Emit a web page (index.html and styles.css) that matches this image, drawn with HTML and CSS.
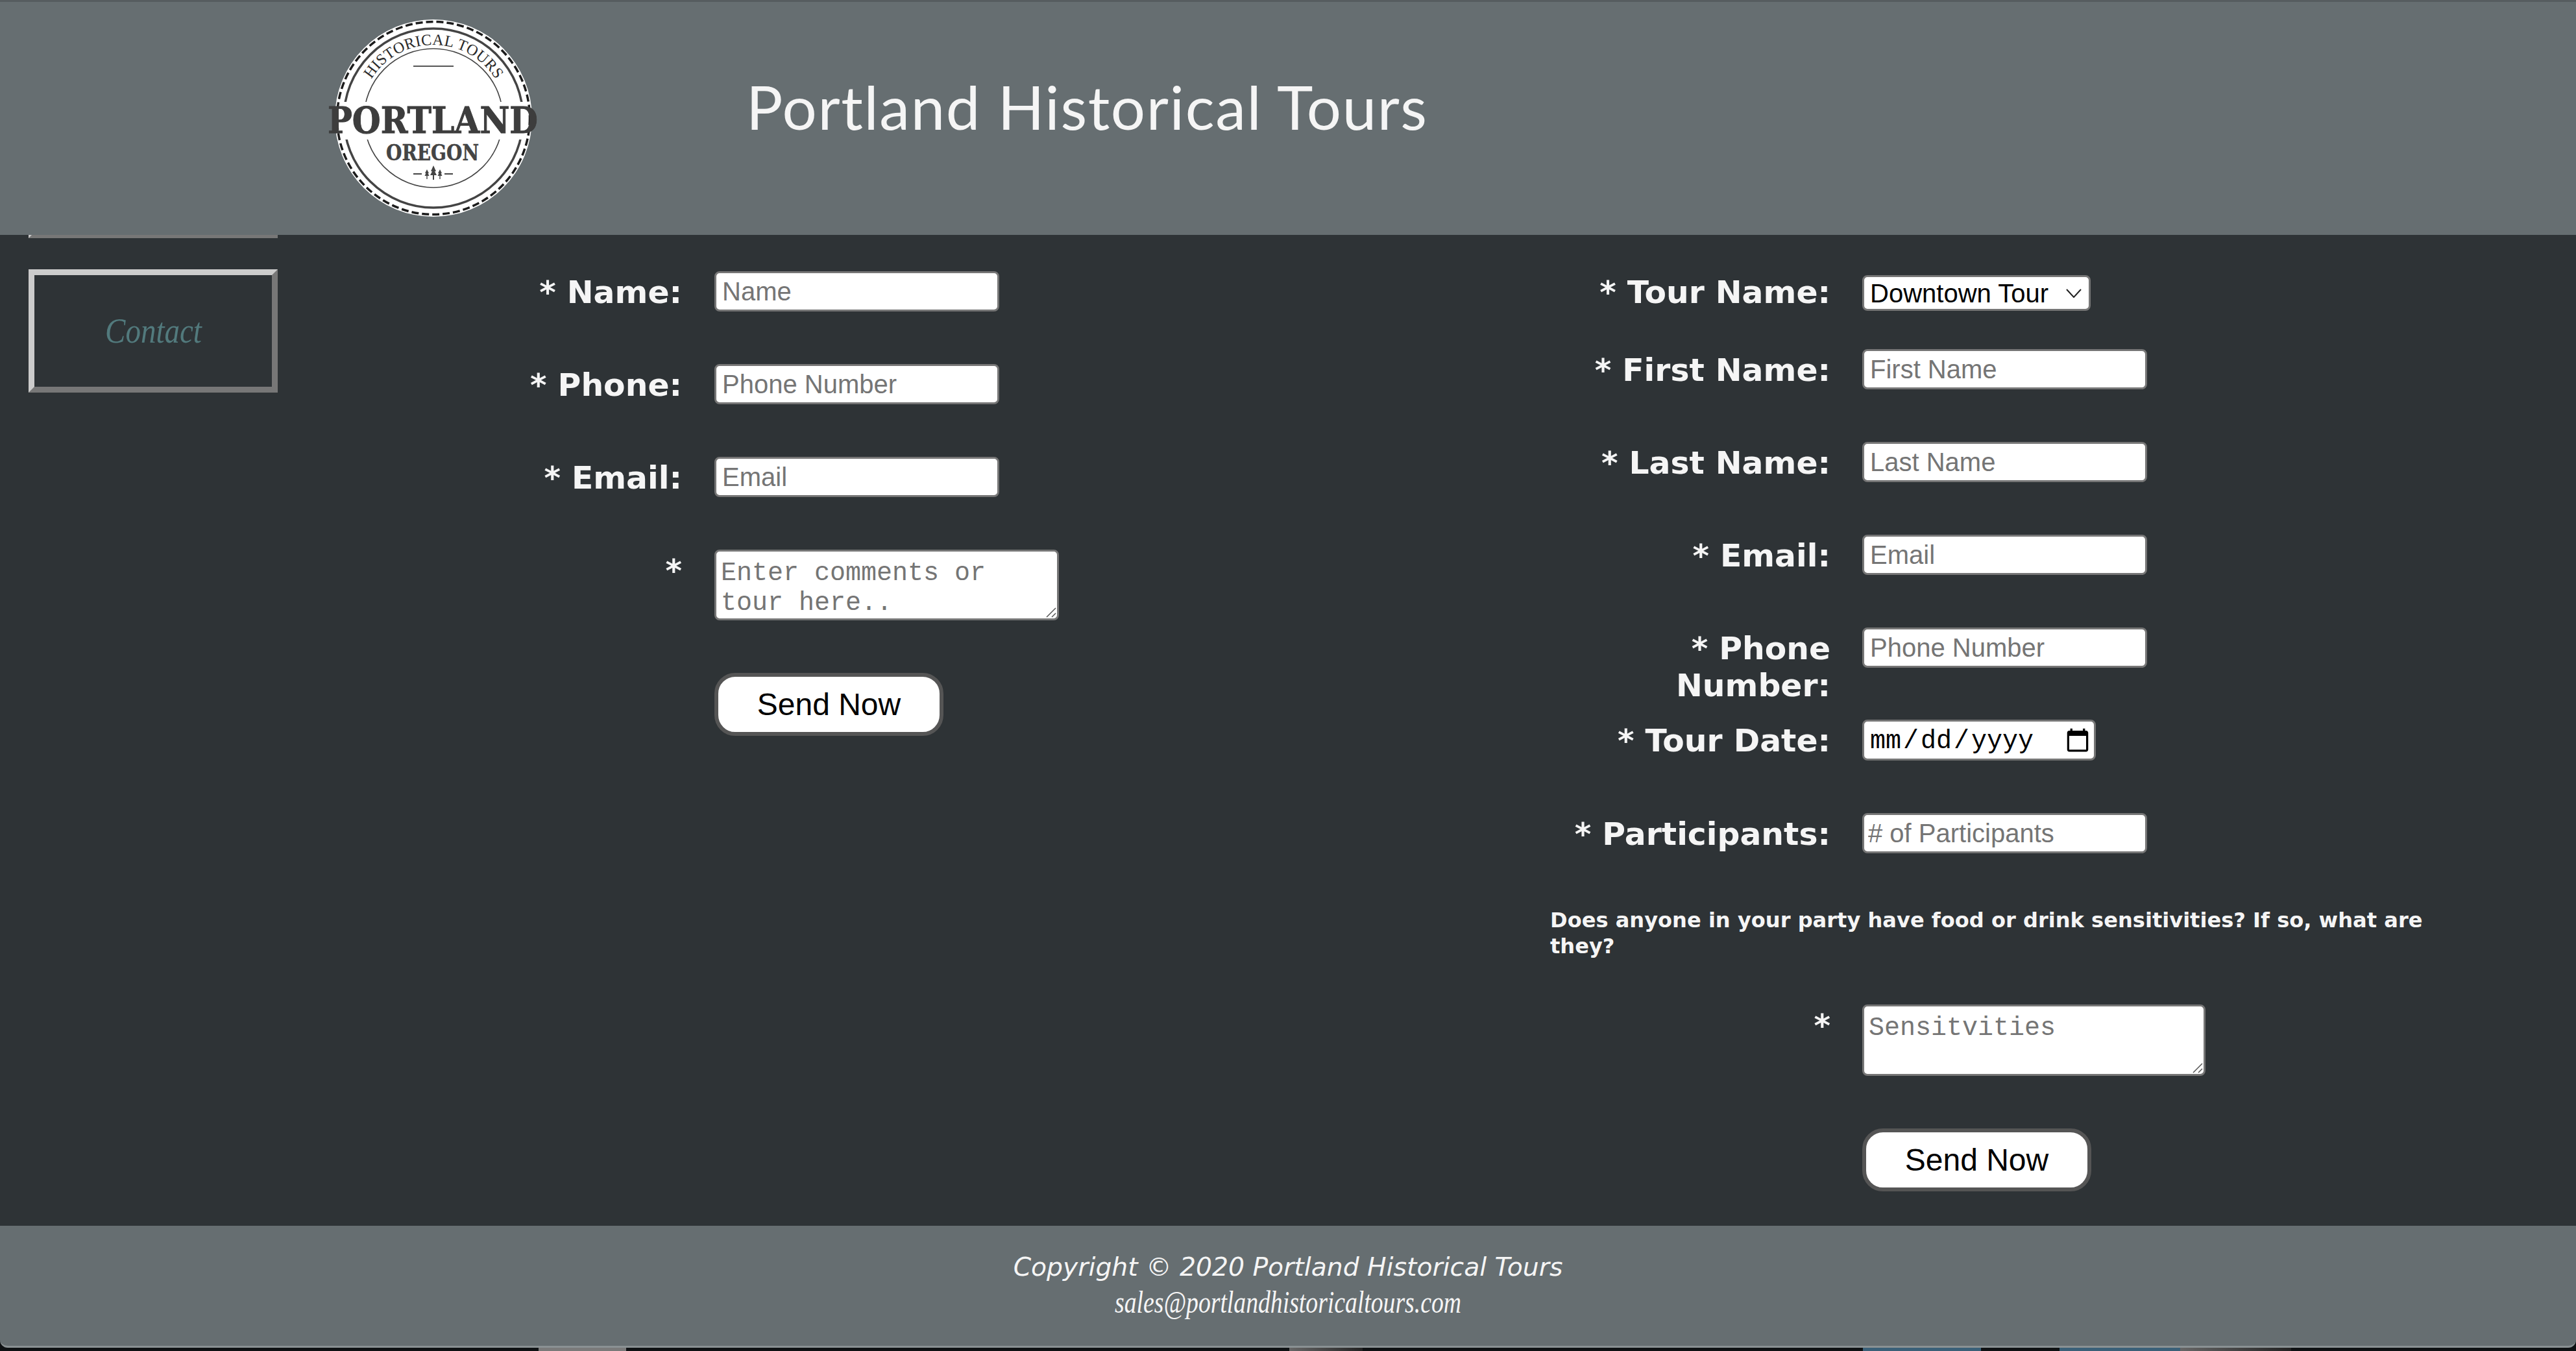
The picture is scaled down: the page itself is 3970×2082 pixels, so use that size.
FILE: index.html
```html
<!DOCTYPE html>
<html lang="en">
<head>
<meta charset="utf-8">
<title>Portland Historical Tours</title>
<link rel="stylesheet" href="styles.css">
</head>
<body>
<header class="site-header">
  <svg class="logo" viewBox="470 20 400 325" width="400" height="325" role="img" aria-label="Portland Oregon Historical Tours">
    <circle cx="668" cy="182" r="152" fill="#fff"/>
    <circle cx="668" cy="182" r="148.500" fill="none" stroke="#1c1c1c" stroke-width="3.500" stroke-dasharray="11 5"/>
    <circle cx="668" cy="182" r="138" fill="none" stroke="#444" stroke-width="3.500"/>
    <circle cx="668" cy="182" r="107" fill="none" stroke="#444" stroke-width="1.600"/>
    <rect x="526" y="157" width="284" height="58" fill="#fff"/>
    <path id="logo-arc" d="M572.2 122.1 A113 113 0 0 1 763.8 122.1" fill="none"/>
    <text class="logo-arc-text"><textPath href="#logo-arc" textLength="229" lengthAdjust="spacing">HISTORICAL TOURS</textPath></text>
    <rect x="637" y="101" width="62" height="2" fill="#555"/>
    <text class="logo-big" x="505" y="205" textLength="324" lengthAdjust="spacingAndGlyphs">PORTLAND</text>
    <text class="logo-mid" x="595" y="247" textLength="143" lengthAdjust="spacingAndGlyphs">OREGON</text>
    <rect x="637" y="267" width="13" height="2" fill="#444"/>
    <rect x="685" y="267" width="13" height="2" fill="#444"/>
    <path d="M668 255l-4 9h2l-3 6h4v7h2v-7h4l-3-6h2zM658 261l-3 6h1.500l-2 4h2.800v5h1.400v-5h2.800l-2-4h1.500zM678 261l-3 6h1.500l-2 4h2.800v5h1.400v-5h2.800l-2-4h1.500z" fill="#444"/>
  </svg>
  <h1 class="site-title">Portland Historical Tours</h1>
</header>

<main class="page-main">
  <nav class="side-nav">
    <a class="nav-box nav-box-hidden" href="#" aria-hidden="true"></a>
    <a class="nav-box" href="#"><span class="nav-text">Contact</span></a>
  </nav>

  <form class="form form-contact">
    <div class="row">
      <label class="field-label">* Name:</label>
      <input class="text-input" type="text" placeholder="Name">
    </div>
    <div class="row">
      <label class="field-label">* Phone:</label>
      <input class="text-input" type="text" placeholder="Phone Number">
    </div>
    <div class="row">
      <label class="field-label">* Email:</label>
      <input class="text-input" type="text" placeholder="Email">
    </div>
    <div class="row">
      <label class="field-label">*</label>
      <div class="area-wrap">
        <textarea class="text-area text-area-small" placeholder="Enter comments or tour here.."></textarea>
        <svg class="resize-grip" viewBox="0 0 16 16" width="16" height="16" aria-hidden="true"><path d="M1 15L15 1M9 15L15 9" fill="none" stroke="#555" stroke-width="1.500"/></svg>
      </div>
    </div>
    <div class="row">
      <span></span>
      <button class="send-button" type="button">Send Now</button>
    </div>
  </form>

  <form class="form form-booking">
    <div class="row row-select">
      <label class="field-label">* Tour Name:</label>
      <div class="select-wrap">
        <select class="tour-select"><option>Downtown Tour</option></select>
        <svg class="select-chevron" viewBox="0 0 24 14" width="24" height="14" aria-hidden="true"><path d="M1 1L12 13L23 1" fill="none" stroke="#222" stroke-width="2"/></svg>
      </div>
    </div>
    <div class="row">
      <label class="field-label">* First Name:</label>
      <input class="text-input" type="text" placeholder="First Name">
    </div>
    <div class="row">
      <label class="field-label">* Last Name:</label>
      <input class="text-input" type="text" placeholder="Last Name">
    </div>
    <div class="row">
      <label class="field-label">* Email:</label>
      <input class="text-input" type="text" placeholder="Email">
    </div>
    <div class="row row-wrapped">
      <label class="field-label">* Phone Number:</label>
      <input class="text-input" type="text" placeholder="Phone Number">
    </div>
    <div class="row">
      <label class="field-label">* Tour Date:</label>
      <input class="date-input" type="date">
    </div>
    <div class="row row-short">
      <label class="field-label">* Participants:</label>
      <input class="text-input number-input" type="number" placeholder="# of Participants">
    </div>
    <p class="question">Does anyone in your party have food or drink sensitivities? If so, what are they?</p>
    <div class="row">
      <label class="field-label">*</label>
      <div class="area-wrap">
        <textarea class="text-area text-area-large" placeholder="Sensitvities"></textarea>
        <svg class="resize-grip" viewBox="0 0 16 16" width="16" height="16" aria-hidden="true"><path d="M1 15L15 1M9 15L15 9" fill="none" stroke="#555" stroke-width="1.500"/></svg>
      </div>
    </div>
    <div class="row">
      <span></span>
      <button class="send-button" type="button">Send Now</button>
    </div>
  </form>
</main>

<footer class="site-footer">
  <p class="copyright">Copyright © 2020 Portland Historical Tours</p>
  <p class="sales-mail">sales@portlandhistoricaltours.com</p>
</footer>

<div class="desktop-strip">
  <span class="strip-a"></span>
  <span class="strip-b"></span>
  <span class="strip-c"></span>
  <span class="strip-d"></span>
  <span class="strip-e"></span>
  <span class="strip-f"></span>
  <span class="strip-g"></span>
  <span class="strip-h"></span>
</div>
</body>
</html>
```
FILE: styles.css
```css
* { box-sizing: border-box; }

html, body { margin: 0; height: 100%; }

body {
  display: flex;
  flex-direction: column;
  height: 2082px;
  overflow: hidden;
  background: #0e1113;
  font-family: "DejaVu Sans", sans-serif;
}

.site-header {
  position: relative;
  z-index: 1;
  flex: none;
  display: flex;
  align-items: flex-start;
  height: 362px;
  padding: 20px 0 0 470px;
  background: #666e71;
  border-top: 3px solid #565c5f;
}

.logo { flex: none; margin-top: -3px; }

.logo-arc-text { font: 24px "Liberation Serif", serif; fill: #2a2a2a; }
.logo-big { font: 700 56px "DejaVu Serif", serif; fill: #3d3d3d; stroke: #3d3d3d; stroke-width: 1; }
.logo-mid { font: 700 33px "DejaVu Serif", serif; fill: #444; stroke: #444; stroke-width: .5; }

.site-title {
  margin: 85px 0 0 280px;
  font: 400 94px/1.2 "Lato", sans-serif;
  letter-spacing: 1.6px;
  color: #f5f5f5;
  white-space: nowrap;
}

.page-main {
  flex: 1;
  display: flex;
  background: #2e3336;
  min-height: 0;
}

.side-nav {
  flex: none;
  width: 620px;
  padding: 0 0 0 44px;
}

.nav-box {
  display: flex;
  align-items: center;
  justify-content: center;
  width: 384px;
  height: 190px;
  margin-bottom: 48px;
  border: 9px solid;
  border-color: #ccc #777 #777 #ccc;
  font: italic 54px "Liberation Serif", serif;
  color: #527a7d;
  text-decoration: none;
}

.nav-text { display: block; transform: scaleX(.87); }

.nav-box-hidden { margin-top: -185px; }

.form { flex: none; }

.form-contact { width: 1769px; padding-top: 56px; }
.form-booking { width: 1400px; padding-top: 58px; }

.row {
  display: grid;
  grid-template-columns: 432px auto;
  justify-content: start;
  align-items: start;
  column-gap: 49px;
  padding-bottom: 81px;
}

.form-contact .row { grid-template-columns: 431px auto; column-gap: 50px; }

.form-booking .row-select { padding-bottom: 59px; }
.form-booking .row-select .field-label { margin-top: 2px; }
.row-short { padding-bottom: 83px; }
.form-booking .row-wrapped { padding-bottom: 24px; }

.field-label {
  margin-top: 4px;
  font-size: 48.8px;
  font-weight: 700;
  line-height: 57px;
  text-align: right;
  color: #f5f5f5;
}

.text-input,
.tour-select,
.date-input,
.text-area {
  border: 3px solid #767676;
  border-radius: 8px;
  background: #fff;
}

.text-input {
  width: 439px;
  height: 62px;
  padding: 0 9px;
  font: 40px "Liberation Sans", sans-serif;
}

.number-input { padding-left: 6px; }

.select-wrap {
  position: relative;
  width: 352px;
  height: 55px;
  margin-top: 4px;
}

.tour-select {
  display: block;
  width: 100%;
  height: 100%;
  padding: 0 0 0 9px;
  appearance: none;
  font: 40px "Liberation Sans", sans-serif;
  color: #000;
}

.select-chevron {
  position: absolute;
  top: 21px;
  right: 14px;
}

.date-input {
  width: 360px;
  height: 63px;
  padding: 3px 4px 0 8px;
  font: 40px "Liberation Mono", monospace;
  color: #000;
}

.date-input::-webkit-datetime-edit-text { padding: 0 2px; }

.date-input::-webkit-calendar-picker-indicator {
  width: 42px;
  height: 42px;
  padding: 0;
  margin: 0;
}

.area-wrap {
  position: relative;
  width: fit-content;
}

.text-area {
  display: block;
  padding: 11px 7px 0;
  font: 40px/46px "Liberation Mono", monospace;
  resize: none;
}

.resize-grip {
  position: absolute;
  right: 4px;
  bottom: 4px;
}

.text-area-small { width: 531px; height: 109px; }
.text-area-large { width: 529px; height: 110px; }

.send-button {
  width: 353px;
  height: 97px;
  padding: 0;
  border: 6px solid #555;
  border-radius: 32px;
  background: #fff;
  font: 48px "Liberation Sans", sans-serif;
  color: #000;
}

.question {
  margin: 0 0 70px;
  font-size: 32.1px;
  font-weight: 700;
  line-height: 40px;
  color: #f5f5f5;
}

.site-footer {
  flex: none;
  height: 188px;
  padding-top: 41px;
  background: #666e71;
  border-bottom: 3px solid #8a9193;
  border-radius: 0 0 12px 12px;
  text-align: center;
  color: #f5f5f5;
}

.copyright {
  margin: 0;
  font: italic 39.3px/46px "DejaVu Sans", sans-serif;
}

.sales-mail {
  margin: 6px 0 0;
  font: italic 48px/50px "Liberation Serif", serif;
  transform: scaleX(.785);
}

.desktop-strip {
  flex: none;
  display: flex;
  height: 5px;
}

.desktop-strip span { display: block; height: 100%; }

.strip-a { width: 830px; }
.strip-b { width: 135px; background: #7a7a7a; }
.strip-c { width: 1022px; }
.strip-d { width: 113px; background: linear-gradient(90deg, #666, #222); }
.strip-e { width: 771px; }
.strip-f { width: 182px; background: #3a6078; }
.strip-g { width: 121px; }
.strip-h { width: 357px; background: linear-gradient(90deg, #3a6078 52%, #666 52%, #222); }
```
